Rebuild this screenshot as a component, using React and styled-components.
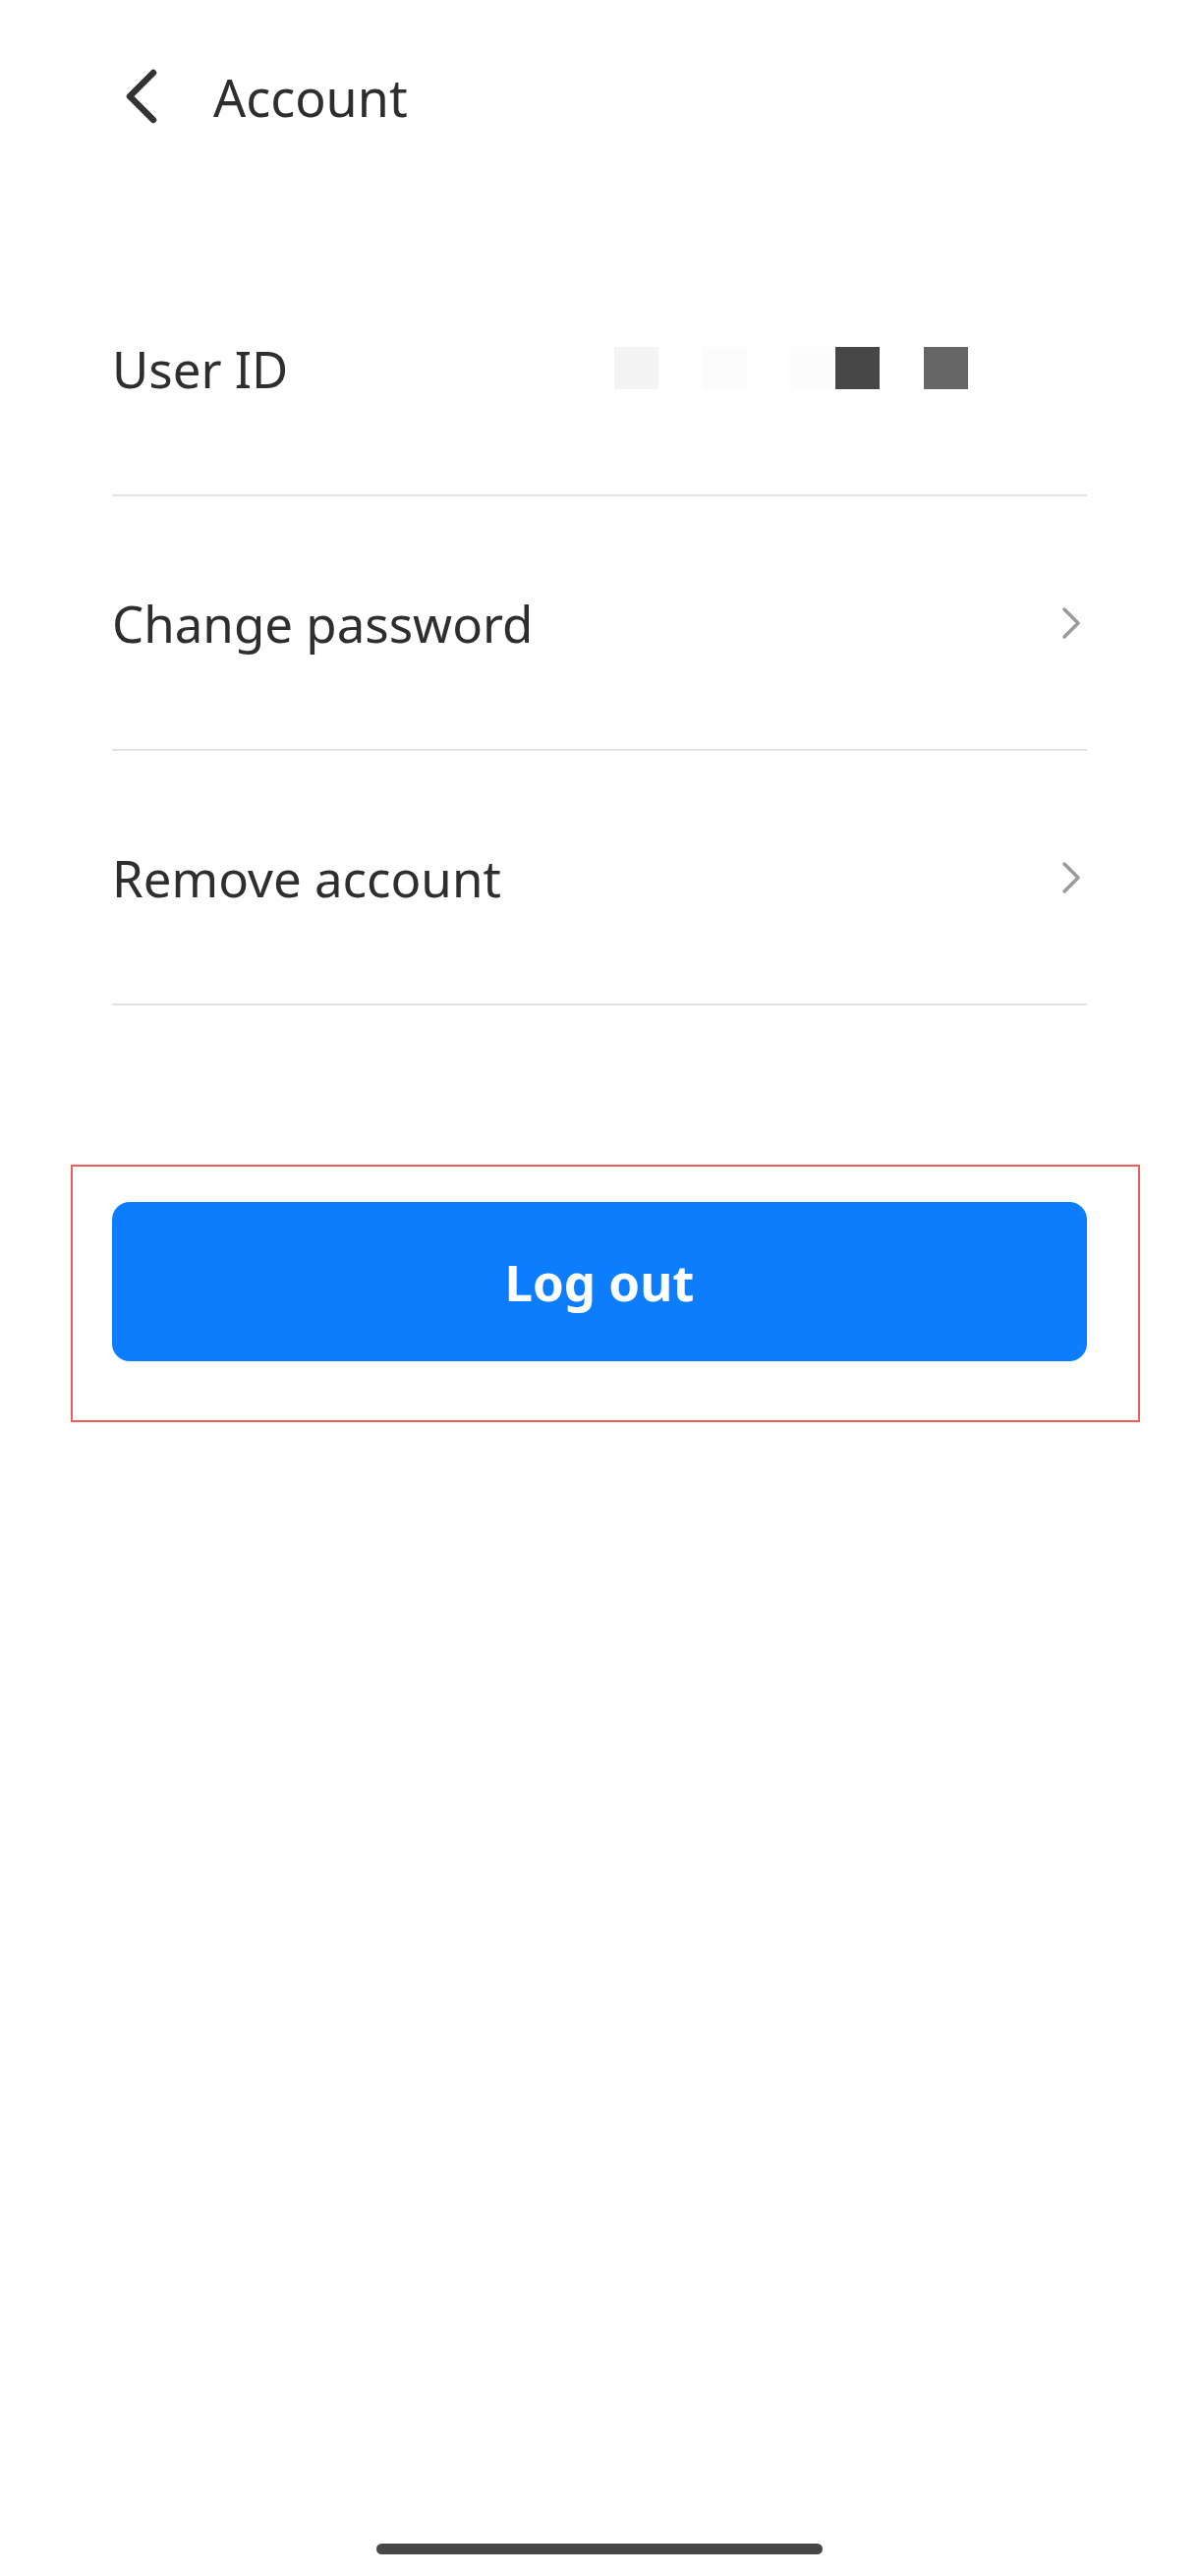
import React from 'react';
import styled, { createGlobalStyle } from 'styled-components';

const GlobalStyle = createGlobalStyle`
  html, body {
    margin: 0;
    padding: 0;
    background: #ffffff;
  }
  body {
    font-family: 'Noto Sans', 'Liberation Sans', sans-serif;
    color: #2e2e2e;
  }
`;

const Page = styled.div`
  display: flex;
  flex-direction: column;
  min-height: 2621px;
  width: 1220px;
  box-sizing: border-box;
  background: #fff;
`;

const Header = styled.header`
  display: flex;
  align-items: center;
  height: 196px;
  padding-left: 125px;
  gap: 56px;
`;

const BackButton = styled.button`
  display: flex;
  align-items: center;
  justify-content: center;
  padding: 0;
  border: none;
  background: none;
  width: 36px;
  height: 56px;
  cursor: pointer;
`;

const Title = styled.h1`
  margin: 0;
  font-size: 52px;
  font-weight: 400;
  color: #2e2e2e;
  letter-spacing: 0;
`;

const Content = styled.main`
  display: flex;
  flex-direction: column;
  padding: 50px 114px 0 114px;
`;

const List = styled.div`
  display: flex;
  flex-direction: column;
`;

const Row = styled.div`
  display: flex;
  align-items: center;
  justify-content: space-between;
  height: 257px;
  border-bottom: 2px solid #e2e2e2;
  cursor: ${(p) => (p.$link ? 'pointer' : 'default')};
`;

const Label = styled.span`
  flex-shrink: 0;
  white-space: nowrap;
  font-size: 51px;
  color: #2e2e2e;
`;

const IdValue = styled.div`
  display: flex;
  margin-left: auto;
  margin-right: 121px;
`;

const IdCell = styled.span`
  display: block;
  width: 45px;
  height: 43px;
  background: ${(p) => p.$color};
`;

const Chevron = styled.svg`
  width: 20px;
  height: 34px;
  margin-right: 6px;
`;

const Highlight = styled.div`
  margin: 162px -54px 0 -42px;
  padding: 36px 52px 60px 40px;
  border: 2px solid #ef5a5a;
`;

const LogoutButton = styled.button`
  display: flex;
  align-items: center;
  justify-content: center;
  width: 100%;
  height: 162px;
  border: none;
  border-radius: 18px;
  background: #0c7dfd;
  color: #ffffff;
  font-family: 'Noto Sans', 'Liberation Sans', sans-serif;
  font-size: 51px;
  font-weight: 700;
  cursor: pointer;
`;

const Spacer = styled.div`
  flex: 1;
`;

const HomeBar = styled.div`
  align-self: center;
  width: 454px;
  height: 11px;
  border-radius: 6px;
  background: #474747;
  margin-bottom: 22px;
`;

const idCells = [
  '#f4f4f4',
  '#ffffff',
  '#fbfbfb',
  '#ffffff',
  '#fcfcfc',
  '#474747',
  '#ffffff',
  '#666666',
];

const RightArrow = () => (
  <Chevron viewBox="0 0 20 34" fill="none">
    <polyline
      points="3,3 17,17 3,31"
      stroke="#9a9a9a"
      strokeWidth="3.5"
      strokeLinecap="round"
      strokeLinejoin="round"
    />
  </Chevron>
);

export default function App() {
  return (
    <>
      <GlobalStyle />
      <Page>
        <Header>
          <BackButton aria-label="Back">
            <svg width="36" height="56" viewBox="0 0 36 56" fill="none">
              <polyline
                points="31,4 7,28 31,52"
                stroke="#333333"
                strokeWidth="6.5"
                strokeLinecap="round"
                strokeLinejoin="round"
              />
            </svg>
          </BackButton>
          <Title>Account</Title>
        </Header>
        <Content>
          <List>
            <Row>
              <Label>User ID</Label>
              <IdValue>
                {idCells.map((c, i) => (
                  <IdCell key={i} $color={c} />
                ))}
              </IdValue>
            </Row>
            <Row $link>
              <Label>Change password</Label>
              <RightArrow />
            </Row>
            <Row $link>
              <Label>Remove account</Label>
              <RightArrow />
            </Row>
          </List>
          <Highlight>
            <LogoutButton>Log out</LogoutButton>
          </Highlight>
        </Content>
        <Spacer />
        <HomeBar />
      </Page>
    </>
  );
}
